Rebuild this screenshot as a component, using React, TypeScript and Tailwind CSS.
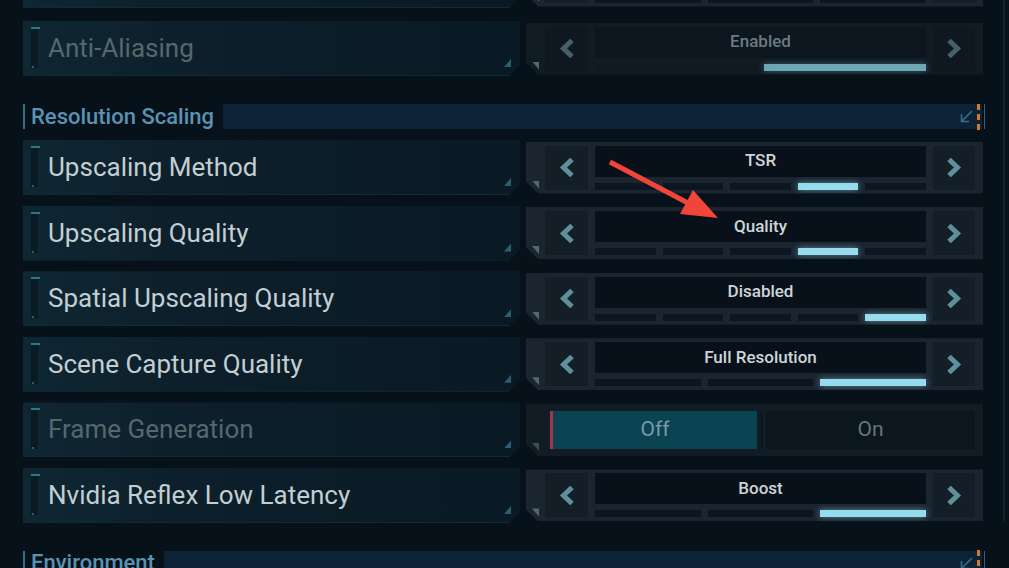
import React from 'react';

type SelectorProps = {
  value: string;
  segments: number;
  active: number;
  disabled?: boolean;
};

const Chevron = ({ dir, color }: { dir: 'left' | 'right'; color: string }) => (
  <svg width="17" height="19" viewBox="0 0 17 19">
    <path
      d={dir === 'left' ? 'M14 1.5 L5.5 9.5 L14 17.5' : 'M3 1.5 L11.5 9.5 L3 17.5'}
      fill="none"
      stroke={color}
      strokeWidth="5"
      strokeLinejoin="miter"
    />
  </svg>
);

function Selector({ value, segments, active, disabled }: SelectorProps) {
  const arrow = disabled ? '#46606a' : '#5f8f9b';
  return (
    <div
      className={`relative flex h-[52px] w-[457px] gap-[7px] py-[4px] pl-[19px] pr-[8px] [clip-path:polygon(0_0,100%_0,100%_100%,12px_100%,0_calc(100%-12px))] ${
        disabled ? 'bg-[#111b23]' : 'bg-[#1a2530]'
      }`}
    >
      <div className={`flex w-[43px] items-center justify-center ${disabled ? 'bg-[#0f1820]' : 'bg-[#141e27]'}`}>
        <Chevron dir="left" color={arrow} />
      </div>
      <div className="flex w-[331px] flex-col">
        <div
          className={`flex h-[31px] items-center justify-center text-[17px] font-medium ${
            disabled ? 'bg-[#0d161e] text-[#6b7b83]' : 'bg-[#08111a] text-[#cdd5d8]'
          }`}
        >
          {value}
        </div>
        <div className="mt-[6px] flex h-[7px] gap-[7px]">
          {Array.from({ length: segments }).map((_, i) => (
            <div
              key={i}
              className={`flex-1 ${
                i === active
                  ? disabled
                    ? 'bg-[#6fa6b6] shadow-[0_0_6px_rgba(110,166,182,0.5)]'
                    : 'bg-[#95dcef] shadow-[0_0_6px_rgba(149,220,239,0.55)]'
                  : disabled
                  ? 'bg-[#0f1921]'
                  : 'bg-[#0b1620]'
              }`}
            />
          ))}
        </div>
      </div>
      <div className={`flex w-[42px] items-center justify-center ${disabled ? 'bg-[#0f1820]' : 'bg-[#141e27]'}`}>
        <Chevron dir="right" color={arrow} />
      </div>
      <div className="absolute bottom-[5px] left-[6px] h-[8px] w-[7px] bg-[#56666f] [clip-path:polygon(0_0,100%_0,100%_100%)]" />
    </div>
  );
}

function Toggle() {
  return (
    <div className="relative flex h-[52px] w-[457px] gap-[4px] py-[7px] pl-[24px] pr-[8px] bg-[#111c24] [clip-path:polygon(0_0,100%_0,100%_100%,12px_100%,0_calc(100%-12px))]">
      <div className="flex w-[207px] items-center justify-center border-l-[3px] border-[#a8314c] bg-[#0a4352] text-[21px] text-[#7b99a2]">
        Off
      </div>
      <div className="w-[1px] bg-[#07111a]" />
      <div className="flex flex-1 items-center justify-center bg-[#0b161d] text-[21px] text-[#66767c]">On</div>
      <div className="absolute bottom-[5px] left-[6px] h-[8px] w-[7px] bg-[#3e4d55] [clip-path:polygon(0_0,100%_0,100%_100%)]" />
    </div>
  );
}

function Row({
  label,
  dim,
  className = '',
  children,
}: {
  label: string;
  dim?: boolean;
  className?: string;
  children: React.ReactNode;
}) {
  return (
    <div className={`flex h-[55px] items-center gap-[6px] ${className}`}>
      <div className="relative flex h-[55px] w-[497px] items-center border-b border-[#112a35] bg-[linear-gradient(90deg,#0f2733_0%,#0c1f2a_35%,#0a1a24_100%)] pl-[25px] [clip-path:polygon(0_0,100%_0,100%_calc(100%-11px),calc(100%-11px)_100%,0_100%)]">
        <div className="absolute bottom-[7px] left-[8px] top-[6px] w-[7px] bg-[#0b1b24]">
          <div className="h-[2px] w-[9px] bg-[#2c7a80]" />
          <div className="absolute bottom-0 left-[1px] h-[2px] w-[2px] bg-[#2a5d66]" />
        </div>
        <span className={`text-[26px] leading-none ${dim ? 'text-[#56676e]' : 'text-[#c3ced2]'}`}>{label}</span>
        <div className="absolute bottom-[8px] right-[9px] h-[8px] w-[7px] bg-[#28606f] [clip-path:polygon(100%_0,100%_100%,0_100%)]" />
      </div>
      {children}
    </div>
  );
}

function SectionHeader({ title, className = '' }: { title: string; className?: string }) {
  return (
    <div className={`flex h-[25px] items-center ${className}`}>
      <div className="h-full w-[2px] bg-[#3b6e85]" />
      <span className="ml-[6px] text-[22px] font-medium leading-none text-[#5a92b2]">{title}</span>
      <div className="relative ml-[9px] flex h-full flex-1 items-center justify-end bg-[#0c2236] pr-[2px]">
        <svg width="13" height="13" viewBox="0 0 13 13" className="mr-[4px]">
          <path d="M12 1 L2 11 M1.5 4 V11.5 H9" fill="none" stroke="#3a6a88" strokeWidth="1.6" />
        </svg>
        <div className="h-[26px] w-[3px] border-l-[3px] border-dashed border-[#d27a2a]" />
      </div>
      <div className="ml-[2px] h-full w-[1px] bg-[#3a5d78]" />
    </div>
  );
}

export default function App() {
  return (
    <div className="relative h-[568px] w-[1009px] overflow-hidden bg-[#07111a] font-['Roboto',sans-serif]">
      <div className="h-full w-[1005px] border-r-2 border-[#13222b]">
        <div className="-mt-[47px] flex w-[985px] flex-col pl-[23px]">
          <Row label="">
            <Selector value="" segments={3} active={-1} />
          </Row>
          <Row label="Anti-Aliasing" dim className="mt-[13px]">
            <Selector value="Enabled" segments={2} active={1} disabled />
          </Row>
          <SectionHeader title="Resolution Scaling" className="mt-[28px]" />
          <Row label="Upscaling Method" className="mt-[11px]">
            <Selector value="TSR" segments={5} active={3} />
          </Row>
          <Row label="Upscaling Quality" className="mt-[10.6px]">
            <Selector value="Quality" segments={5} active={3} />
          </Row>
          <Row label="Spatial Upscaling Quality" className="mt-[10.6px]">
            <Selector value="Disabled" segments={5} active={4} />
          </Row>
          <Row label="Scene Capture Quality" className="mt-[10.6px]">
            <Selector value="Full Resolution" segments={3} active={2} />
          </Row>
          <Row label="Frame Generation" dim className="mt-[10.6px]">
            <Toggle />
          </Row>
          <Row label="Nvidia Reflex Low Latency" className="mt-[10.6px]">
            <Selector value="Boost" segments={3} active={2} />
          </Row>
          <SectionHeader title="Environment" className="mt-[28px]" />
        </div>
      </div>

      {/* annotation arrow */}
      <svg className="pointer-events-none absolute left-0 top-0" width="1009" height="568">
        <line x1="610" y1="162" x2="688" y2="203" stroke="#f1453a" strokeWidth="5" />
        <polygon points="718,218 680,214 693,190" fill="#f1453a" />
      </svg>
    </div>
  );
}
